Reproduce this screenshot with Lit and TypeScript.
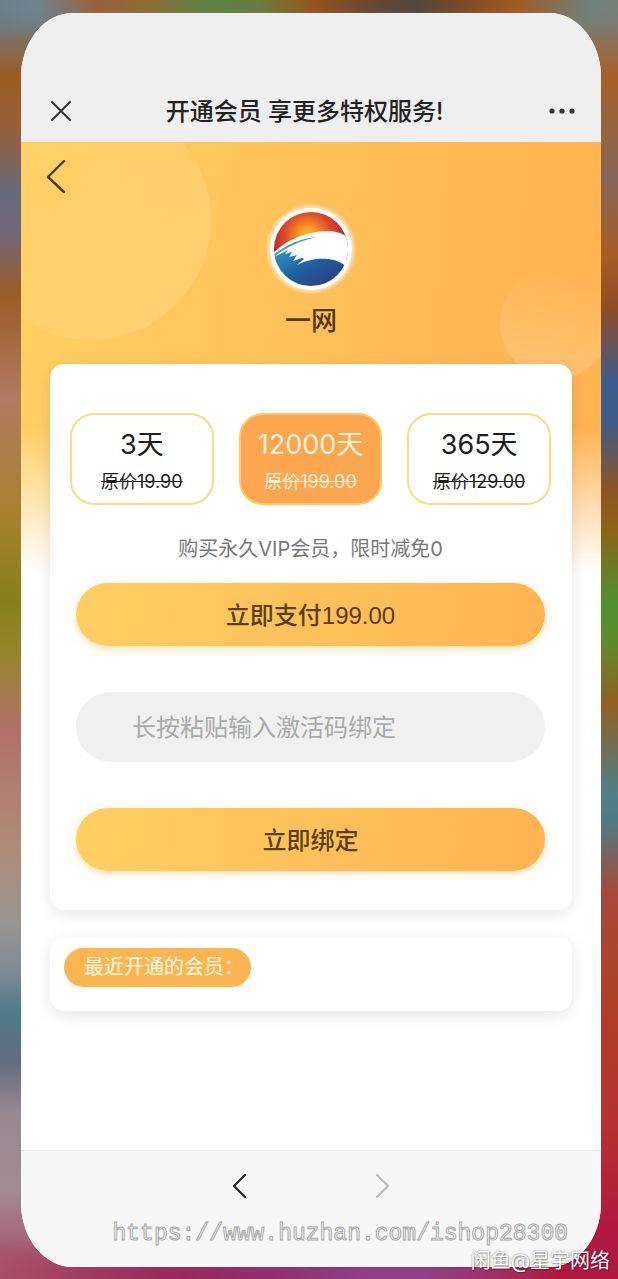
import { LitElement, html, css, svg } from "lit";
import { customElement, state } from "lit/decorators.js";
import { classMap } from "lit/directives/class-map.js";

interface Plan {
  label: string;
  price: string;
}

const PLANS: Plan[] = [
  { label: "3天", price: "19.90" },
  { label: "12000天", price: "199.00" },
  { label: "365天", price: "129.00" },
];

const logo = svg`
  <defs>
    <clipPath id="disc"><circle cx="45" cy="45" r="37" /></clipPath>
    <radialGradient id="sun" gradientUnits="userSpaceOnUse" cx="42" cy="32" r="36">
      <stop offset="0" stop-color="#fbc21f" />
      <stop offset="0.25" stop-color="#f59a23" />
      <stop offset="0.65" stop-color="#dd4a2b" />
      <stop offset="1" stop-color="#bd2633" />
    </radialGradient>
    <linearGradient id="sea" x1="0" y1="0" x2="1" y2="1">
      <stop offset="0" stop-color="#2a9cc4" />
      <stop offset="0.5" stop-color="#1f5c9c" />
      <stop offset="1" stop-color="#352f7c" />
    </linearGradient>
    <radialGradient id="halo">
      <stop offset="0.88" stop-color="#fff" stop-opacity="0.7" />
      <stop offset="1" stop-color="#fff" stop-opacity="0.1" />
    </radialGradient>
  </defs>
  <circle cx="45" cy="45" r="45" fill="url(#halo)" />
  <circle cx="45" cy="45" r="41" fill="#fff" />
  <g clip-path="url(#disc)">
    <rect x="6" y="6" width="78" height="50" fill="url(#sun)" />
    <path d="M6 50 C22 34 44 27 62 27 C71 27 78 30 84 35 V84 H6 Z" fill="#fff" />
    <path d="M6 52 C18 42 34 34 52 33 C36 36 23 42 13 49 L6 55 Z" fill="#37a3c6" />
    <path d="M6 54 L22 46 L19 50 L26 48 L23 53 L31 51 L27 57 L36 54 L38 55 L31 61 C42 55 54 54 62 55 C71 56 77 59 80 63 L70 84 H6 Z" fill="url(#sea)" />
    <path d="M82 44 C83 54 82 60 77 66 L84 66 V44 Z" fill="#fff" />
  </g>`;

@customElement("app-root")
export class AppRoot extends LitElement {
  @state() private selected = 1;

  static styles = css`
    :host {
      display: block;
      font-family: Inter, "Noto Sans CJK SC", sans-serif;
      color: #222;
    }
    * {
      box-sizing: border-box;
    }
    button,
    input {
      font: inherit;
      color: inherit;
      border: 0;
      margin: 0;
      padding: 0;
      background: none;
    }
    button {
      cursor: pointer;
    }
    svg {
      display: block;
    }
    .stage {
      position: relative;
      display: flex;
      min-height: 100vh;
      padding: 13px 17px 12px 21px;
      background:
        linear-gradient(180deg, #6b8088 0%, #74787a 2%, #9a5b20 6%, #96603a 10%, #6a6a7c 15%, #70697a 18%, #9c5c28 23%, #b07a60 31%, #a88030 40%, #85801e 47%, #94862c 51%, #b0706a 57%, #ae8a78 66%, #989490 72%, #7f8a94 76%, #507c88 79%, #646c80 83%, #988890 87%, #a08c92 93%, #a84868 100%) left / 50% 100% no-repeat,
        linear-gradient(180deg, #788078 0%, #80786c 2%, #a86028 6%, #876858 14%, #a85c28 20%, #904c24 24%, #3c5c90 30%, #3f5c88 33%, #885428 38%, #906018 41%, #4f9030 47%, #5c8c2c 50%, #906020 55%, #508088 62%, #4f7c84 64%, #a84838 70%, #b04028 78%, #b83030 88%, #b01840 96%) right / 50% 100% no-repeat;
    }
    .stage::before,
    .stage::after {
      content: "";
      position: absolute;
      left: 0;
      right: 0;
      height: 40px;
    }
    .stage::before {
      top: 0;
      background: linear-gradient(90deg, #6b8088 0%, #6f8490 6%, #9a6238 16%, #8a7038 25%, #5c8446 34%, #6c7c40 42%, #94541c 51%, #6c4830 59%, #50463c 67%, #7c4c24 75%, #a05c24 84%, #70807c 95%, #788078 100%);
      mask-image: linear-gradient(#000 20%, transparent);
    }
    .stage::after {
      bottom: 0;
      background: linear-gradient(90deg, #a85068 0%, #a03a60 14%, #98285c 30%, #903070 45%, #904088 60%, #904088 68%, #a03068 80%, #b01840 90%);
      mask-image: linear-gradient(transparent, #000 80%);
    }
    .phone {
      position: relative;
      z-index: 1;
      flex: 1;
      min-width: 0;
      display: flex;
      flex-direction: column;
      overflow: hidden;
      border-radius: 52px / 64px;
      background: #fff;
    }
    .bar {
      display: flex;
      align-items: center;
      justify-content: space-between;
      padding: 66px 25px 0 28px;
      height: 129px;
      background: #efeff0;
    }
    .bar h1 {
      margin: 0;
      padding-top: 2px;
      font-size: 24px;
      line-height: 32px;
      font-weight: 500;
    }
    .more {
      padding-left: 12px;
    }
    .page {
      position: relative;
      flex: 1;
      display: flex;
      flex-direction: column;
      padding: 16px 29px 40px;
    }
    .backdrop {
      position: absolute;
      inset: 0 0 auto;
      height: 432px;
      overflow: hidden;
      background: linear-gradient(95deg, #ffcf62, #ffc45c 40%, #ffb653 75%, #ffb351);
      mask-image: linear-gradient(#000 66%, transparent);
    }
    .bubble {
      position: absolute;
      border-radius: 50%;
    }
    .bubble.large {
      left: -50px;
      top: -42px;
      width: 240px;
      height: 240px;
      background: linear-gradient(135deg, rgba(255, 255, 255, 0), rgba(255, 226, 150, 0.36));
    }
    .bubble.small {
      right: -10px;
      top: 126px;
      width: 111px;
      height: 111px;
      background: linear-gradient(190deg, rgba(255, 205, 130, 0) 10%, rgba(255, 214, 150, 0.5));
    }
    .hero {
      position: relative;
      display: flex;
      flex-direction: column;
      color: #51381a;
    }
    .back {
      align-self: flex-start;
      margin-left: -6px;
    }
    .avatar {
      align-self: center;
      margin-top: 8px;
    }
    .name {
      margin: 10px 0 26px;
      text-align: center;
      font-size: 26px;
      line-height: 34px;
      font-weight: 500;
    }
    .card {
      position: relative;
      border-radius: 14px;
      background: #fff;
      box-shadow: 0 4px 16px rgba(0, 0, 0, 0.1);
    }
    .purchase {
      padding: 49px 21px 39px 20px;
    }
    .plans {
      display: grid;
      grid-template-columns: repeat(3, 1fr);
      gap: 25px;
    }
    .plan {
      display: flex;
      flex-direction: column;
      align-items: center;
      gap: 7px;
      padding: 12px 0 9px;
      border: 2px solid #f8dc86;
      border-radius: 24px;
      background: #fff;
      color: #1c1c1c;
    }
    .plan.active {
      background: #fda650;
      border-color: #ffc766;
      color: #fff2d8;
    }
    .days {
      font-size: 27px;
      line-height: 36px;
    }
    .price {
      font-size: 18px;
      line-height: 24px;
    }
    .note {
      margin: 30px 0 20px;
      text-align: center;
      font-size: 20px;
      line-height: 28px;
      color: #777;
    }
    .form {
      display: flex;
      flex-direction: column;
      gap: 46px;
      padding: 0 6px;
    }
    .action {
      height: 63px;
      padding-bottom: 3px;
      border-radius: 32px;
      background: linear-gradient(95deg, #ffcf62, #ffb351);
      box-shadow: 0 3px 8px rgba(255, 179, 81, 0.4);
      font-family: "Liberation Sans", "Noto Sans CJK SC", sans-serif;
      font-size: 24px;
      font-weight: 500;
      color: #5a3f17;
    }
    .code {
      width: 100%;
      height: 70px;
      padding: 0 56px;
      border-radius: 35px;
      background: #f0f0f0;
      font-size: 24px;
    }
    .code::placeholder {
      color: #aaa;
      opacity: 1;
    }
    .recent {
      margin-top: 27px;
      padding: 11px 14px 24px;
    }
    .badge {
      display: inline-block;
      vertical-align: top;
      margin: 0;
      padding: 0 7px 0 20px;
      border-radius: 20px;
      background: #fdb552;
      font-size: 20px;
      line-height: 39px;
      font-weight: 400;
      color: #fff8e4;
    }
    .footer {
      display: flex;
      justify-content: center;
      align-items: flex-start;
      gap: 114px;
      height: 117px;
      padding-top: 20px;
      border-top: 1px solid #e6e6e6;
      background: #f7f7f7;
      color: #222;
    }
    .footer button:disabled {
      color: #bbb;
    }
    .site,
    .seller {
      position: absolute;
      z-index: 2;
      white-space: nowrap;
      pointer-events: none;
    }
    .site {
      right: 50px;
      bottom: 30px;
      font-family: "Liberation Mono", monospace;
      font-size: 23px;
      line-height: 30px;
      color: #f9f9f9;
      -webkit-text-stroke: 1px #a8a8a8;
    }
    .seller {
      right: 8px;
      bottom: 4px;
      font-size: 20px;
      line-height: 28px;
      color: #fff;
      text-shadow: 0 0 2px rgba(0, 0, 0, 0.5), 1px 1px 1px rgba(0, 0, 0, 0.25);
    }
  `;

  render() {
    return html`
      <div class="stage">
        <div class="phone">
          <header class="bar">
            <button aria-label="关闭">
              <svg width="24" height="24" viewBox="0 0 24 24" fill="none" stroke="#333" stroke-width="2" stroke-linecap="round">
                <path d="M3 3 21 21M21 3 3 21" />
              </svg>
            </button>
            <h1>开通会员 享更多特权服务!</h1>
            <button class="more" aria-label="更多">
              <svg width="28" height="24" viewBox="0 0 28 24" fill="#333">
                <circle cx="4" cy="12" r="2.6" />
                <circle cx="14" cy="12" r="2.6" />
                <circle cx="24" cy="12" r="2.6" />
              </svg>
            </button>
          </header>
          <main class="page">
            <div class="backdrop">
              <span class="bubble large"></span>
              <span class="bubble small"></span>
            </div>
            <section class="hero">
              <button class="back" aria-label="返回">
                <svg width="24" height="38" viewBox="0 0 24 38" fill="none" stroke="currentColor" stroke-width="2.4" stroke-linecap="round" stroke-linejoin="round">
                  <path d="M20 3 4 19 20 34" />
                </svg>
              </button>
              <svg class="avatar" width="90" height="90" viewBox="0 0 90 90" role="img" aria-label="一网">${logo}</svg>
              <h2 class="name">一网</h2>
            </section>
            <section class="card purchase">
              <div class="plans">
                ${PLANS.map(
                  (plan, i) => html`
                    <button
                      class=${classMap({ plan: true, active: i === this.selected })}
                      aria-pressed=${i === this.selected}
                      @click=${() => (this.selected = i)}
                    >
                      <span class="days">${plan.label}</span>
                      <s class="price">原价${plan.price}</s>
                    </button>
                  `
                )}
              </div>
              <p class="note">购买永久VIP会员，限时减免0</p>
              <div class="form">
                <button class="action">立即支付${PLANS[this.selected].price}</button>
                <input class="code" type="text" aria-label="激活码" placeholder="长按粘贴输入激活码绑定" />
                <button class="action">立即绑定</button>
              </div>
            </section>
            <section class="card recent">
              <h3 class="badge">最近开通的会员：</h3>
            </section>
          </main>
          <nav class="footer">
            <button aria-label="后退">
              <svg width="28" height="30" viewBox="0 0 28 30" fill="none" stroke="currentColor" stroke-width="2.2" stroke-linecap="round" stroke-linejoin="round">
                <path d="M19 4 8 15 19 26" />
              </svg>
            </button>
            <button aria-label="前进" disabled>
              <svg width="28" height="30" viewBox="0 0 28 30" fill="none" stroke="currentColor" stroke-width="2.2" stroke-linecap="round" stroke-linejoin="round">
                <path d="M9 4 20 15 9 26" />
              </svg>
            </button>
          </nav>
        </div>
        <div class="site">https://www.huzhan.com/ishop28300</div>
        <div class="seller">闲鱼@星宇网络</div>
      </div>
    `;
  }
}
